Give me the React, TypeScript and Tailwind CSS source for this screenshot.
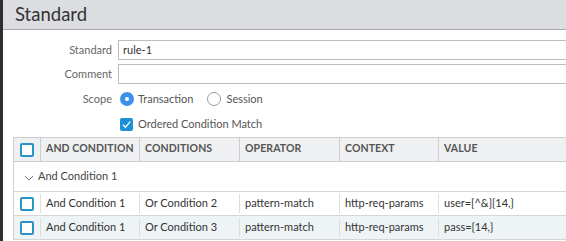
import React from "react";

const font = { fontFamily: "Lato, 'Open Sans', sans-serif" };

function Check({ checked = false }: { checked?: boolean }) {
  if (checked) {
    return (
      <div className="w-[13px] h-[13px] shrink-0 rounded-[2px] bg-[#1e90d8] flex items-center justify-center">
        <svg width="11" height="11" viewBox="0 0 11 11">
          <path d="M2 5.8 L4.4 8.2 L9.2 2.6" stroke="white" strokeWidth="1.3" fill="none" />
        </svg>
      </div>
    );
  }
  return <div className="w-[14px] h-[14px] shrink-0 rounded-[2px] border-2 border-[#2a93c9] bg-white" />;
}

const cols = "grid grid-cols-[26px_99px_100px_100px_99px_200px]";

function Row({ cells, bg }: { cells: string[]; bg: string }) {
  return (
    <div className={`${cols} h-[24px] border-b border-[#d6d6d6] ${bg}`}>
      <div className="flex items-center justify-center">
        <Check />
      </div>
      {cells.map((c, i) => (
        <div key={i} className="min-w-0 flex items-center pl-[5px] border-l border-[#dedede] my-[2px] text-[11px] text-[#333] whitespace-nowrap">
          {c}
        </div>
      ))}
    </div>
  );
}

export default function App() {
  return (
    <div className="w-[566px] h-[241px] overflow-hidden flex bg-white" style={font}>
      <div className="w-[3px] shrink-0 bg-[#2e2e2e]" />
      <div className="flex-1 flex flex-col min-w-0">
        <div className="h-[30px] shrink-0 bg-[#dcdde0] border-b border-[#a8a8a8] flex items-center pl-[12px] text-[18.5px] text-[#333]">
          Standard
        </div>
        <div className="flex flex-col pt-[10px] text-[11px]">
          <div className="flex items-center h-[20px]">
            <div className="w-[109px] shrink-0 text-right text-[#666]">Standard</div>
            <div className="ml-[6px] w-[480px] h-[20px] border border-[#bdbdbd] flex items-center pl-[4px] text-[#333] shrink-0">
              rule-1
            </div>
          </div>
          <div className="flex items-center h-[20px] mt-[4px]">
            <div className="w-[109px] shrink-0 text-right text-[#666]">Comment</div>
            <div className="ml-[6px] w-[480px] h-[20px] border border-[#bdbdbd] shrink-0" />
          </div>
          <div className="flex items-center h-[20px] mt-[5px]">
            <div className="w-[109px] shrink-0 text-right text-[#666]">Scope</div>
            <div className="ml-[8px] w-[14px] h-[14px] shrink-0 rounded-full bg-[#3c91ea] flex items-center justify-center">
              <div className="w-[4px] h-[4px] rounded-full bg-white" />
            </div>
            <div className="ml-[4px] text-[#555]">Transaction</div>
            <div className="ml-[14px] w-[14px] h-[14px] shrink-0 rounded-full border border-[#9a9a9a]" />
            <div className="ml-[5px] text-[#555]">Session</div>
          </div>
          <div className="flex items-center h-[20px] mt-[5px]">
            <div className="ml-[117px]">
              <Check checked />
            </div>
            <div className="ml-[5px] text-[#555]">Ordered Condition Match</div>
          </div>
        </div>
        <div className="ml-[10px] mt-[3px] w-[640px] shrink-0 border-l border-[#d0d0d0]">
          <div className={`${cols} h-[25px] bg-[#eef0f1] border-y border-[#cdcdcd] text-[10.5px] font-bold tracking-[0.1px] text-[#555]`}>
            <div className="flex items-center justify-center">
              <Check />
            </div>
            {["AND CONDITION", "CONDITIONS", "OPERATOR", "CONTEXT", "VALUE"].map((h) => (
              <div key={h} className="min-w-0 flex items-center pl-[5px] pb-[1px] border-l border-[#cdcdcd] whitespace-nowrap">
                {h}
              </div>
            ))}
          </div>
          <div className="h-[30px] border-b border-[#d6d6d6] flex items-center pl-[10px] text-[11px] text-[#444]">
            <svg width="10" height="6" viewBox="0 0 10 6" className="mt-[2px]">
              <path d="M1 1 L5 5 L9 1" stroke="#777" strokeWidth="1" fill="none" />
            </svg>
            <span className="ml-[4px]">And Condition 1</span>
          </div>
          <Row bg="bg-white" cells={["And Condition 1", "Or Condition 2", "pattern-match", "http-req-params", "user=[^&]{14,}"]} />
          <Row bg="bg-[#eef4f6]" cells={["And Condition 1", "Or Condition 3", "pattern-match", "http-req-params", "pass={14,}"]} />
        </div>
      </div>
    </div>
  );
}
